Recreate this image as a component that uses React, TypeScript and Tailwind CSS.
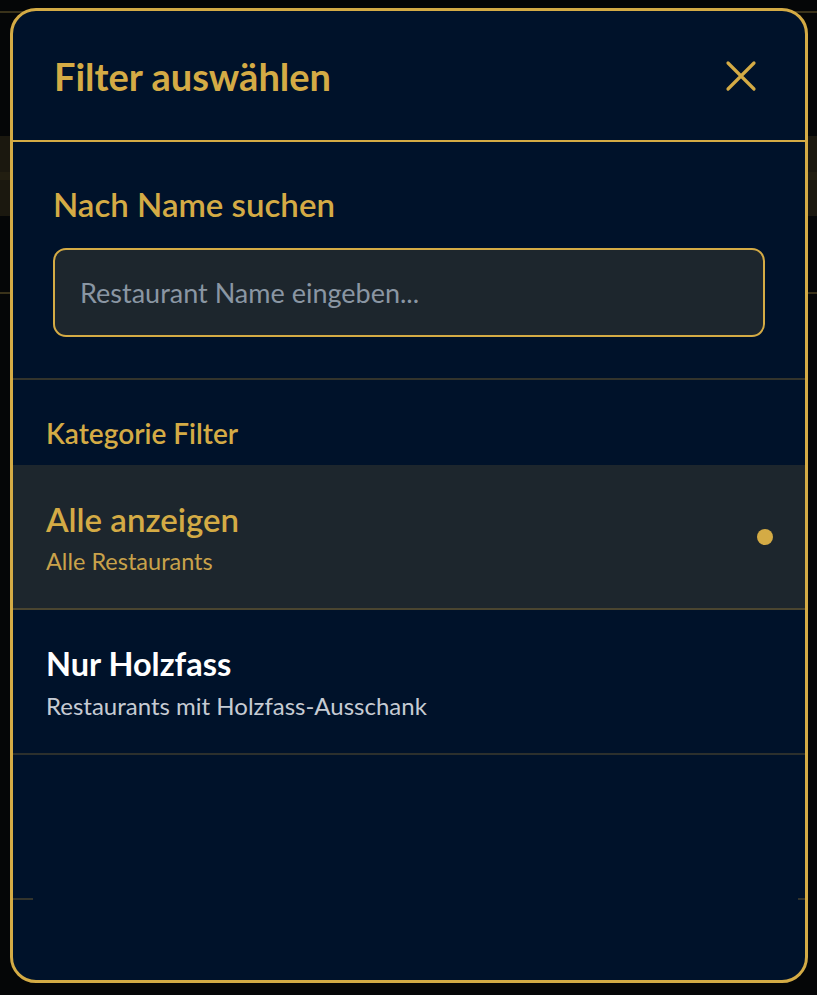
import React from "react";

const font = "font-['Lato','Noto_Sans',sans-serif]";

function CloseIcon() {
  return (
    <svg width="32" height="32" viewBox="0 0 32 32" fill="none">
      <path
        d="M3 3L29 29M29 3L3 29"
        stroke="#d4ab45"
        strokeWidth="3.2"
        strokeLinecap="round"
      />
    </svg>
  );
}

type Option = {
  title: string;
  subtitle: string;
  active?: boolean;
};

const options: Option[] = [
  { title: "Alle anzeigen", subtitle: "Alle Restaurants", active: true },
  { title: "Nur Holzfass", subtitle: "Restaurants mit Holzfass-Ausschank" },
];

function FilterOption({ option }: { option: Option }) {
  return (
    <div
      className={
        option.active
          ? "flex h-[145px] items-center justify-between border-b-2 border-[#4a4530] bg-[#1d262d] pl-[33px] pr-[32px]"
          : "flex h-[145px] items-center justify-between border-b-2 border-[#2c302d] pl-[33px] pr-[32px]"
      }
    >
      <div className="flex flex-col gap-[8px]">
        <span
          className={
            option.active
              ? "text-[33px] font-semibold leading-[40px] text-[#d4ab45]"
              : "text-[32.5px] font-bold leading-[40px] text-white"
          }
        >
          {option.title}
        </span>
        <span
          className={
            option.active
              ? "text-[23.5px] leading-[28px] text-[#c9a24a]"
              : "text-[24px] leading-[28px] text-[#c6cbd3]"
          }
        >
          {option.subtitle}
        </span>
      </div>
      {option.active && <span className="h-4 w-4 rounded-full bg-[#d4ab45]" />}
    </div>
  );
}

export default function App() {
  return (
    <div className={`relative h-[995px] w-full overflow-hidden bg-[#050607] ${font}`}>
      {/* page behind the overlay */}
      <div className="flex flex-col">
        <div className="mt-[11px] h-[2px] bg-[#3a321a]" />
        <div className="mt-[123px] h-[36px] bg-[#1b180f]" />
        <div className="h-[8px] bg-[#221e11]" />
        <div className="h-[36px] bg-[#1b180f]" />
        <div className="mt-[76px] h-[2px] bg-[#3a321a]" />
      </div>

      <div className="absolute left-[10px] top-[8px] flex h-[975px] w-[798px] flex-col overflow-hidden rounded-[26px] border-[3px] border-[#d4ab45] bg-[#00122a]">
        <div className="flex h-[131px] shrink-0 items-center justify-between border-b-2 border-[#d4ab45] pl-[41px] pr-[48px]">
          <h2 className="text-[38px] font-bold leading-none text-[#d4ab45]">
            Filter auswählen
          </h2>
          <button type="button" className="flex items-center justify-center">
            <CloseIcon />
          </button>
        </div>

        <div className="flex h-[238px] shrink-0 flex-col border-b-2 border-[#33342c] px-10 pt-[40px]">
          <label className="text-[33px] font-semibold leading-[44px] text-[#d4ab45]">
            Nach Name suchen
          </label>
          <input
            className="mt-[22px] h-[89px] w-full rounded-[13px] border-2 border-[#d4ab45] bg-[#1d262d] px-[25px] text-[27px] text-[#c6cbd3] outline-none placeholder:text-[#8a96a3]"
            placeholder="Restaurant Name eingeben..."
          />
        </div>

        <div className="flex h-[85px] shrink-0 items-center pl-[33px] pt-[20px]">
          <span className="text-[28px] font-semibold text-[#d4ab45]">
            Kategorie Filter
          </span>
        </div>

        {options.map((option) => (
          <FilterOption key={option.title} option={option} />
        ))}

        <div className="mt-[143px] flex">
          <div className="h-[2px] w-[20px] bg-[#33342c]" />
          <div className="flex-1" />
          <div className="h-[2px] w-[7px] bg-[#33342c]" />
        </div>
      </div>
    </div>
  );
}
